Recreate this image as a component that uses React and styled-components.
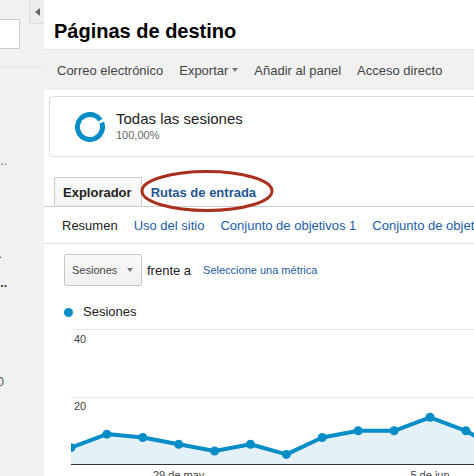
import React from "react";
import styled, { createGlobalStyle } from "styled-components";

const GlobalStyle = createGlobalStyle`
html, body {
    margin: 0;
    padding: 0;
    width: 474px;
    height: 476px;
    overflow: hidden;
    background: #fff;
    font-family: "Liberation Sans", Arial, sans-serif;
}
`

const BLUE = "#058dc7";
const LINK = "#1c5da8";

const Page = styled.div`
display: flex;
height: 476px;
`

/* left navigation, mostly scrolled out of view */
const Sidebar = styled.div`
width: 44px;
flex-shrink: 0;
background: #f1f1f1;
overflow: hidden;
`
const SideHead = styled.div`
height: 66px;
border-bottom: 1px solid #e6e6e6;
display: flex;
justify-content: space-between;
align-items: flex-start;
`
const Search = styled.div`
margin-top: 19px;
margin-left: -1px;
width: 19px;
height: 28px;
background: #fff;
border: 1px solid #ccc;
`
const Collapse = styled.button`
width: 15px;
height: 24px;
padding: 0;
border: 0;
border-left: 1px solid #dcdcdc;
border-bottom: 1px solid #dcdcdc;
background: #ececec;
display: flex;
align-items: center;
justify-content: center;
&::before {
    content: "";
    border-top: 4px solid transparent;
    border-bottom: 4px solid transparent;
    border-right: 5px solid #666;
}
`
const NavItem = styled.div`
margin-top: ${p => p.$top}px;
width: ${p => p.$end}px;
display: flex;
justify-content: flex-end;
white-space: nowrap;
font-size: 12px;
line-height: 16px;
color: ${p => p.$bold ? "#333" : "#555"};
font-weight: ${p => p.$bold ? "bold" : "normal"};
`

const Main = styled.div`
flex: 1;
min-width: 0;
overflow: hidden;
`
const Column = styled.div`
width: 600px;
`
const Header = styled.div`
height: 49px;
box-sizing: border-box;
padding: 21px 0 0 10px;
`
const Title = styled.h1`
margin: 0;
font-size: 20px;
line-height: 20px;
font-weight: bold;
color: #000;
`
const Toolbar = styled.div`
height: 40px;
border-top: 1px solid #e2e2e2;
background: #f1f1f1;
display: flex;
align-items: center;
gap: 16px;
padding-left: 13px;
`
const ToolItem = styled.span`
font-size: 13px;
color: #444;
display: flex;
align-items: center;
gap: 4px;
`
const Caret = styled.span`
border-left: 3.5px solid transparent;
border-right: 3.5px solid transparent;
border-top: 4px solid ${p => p.$color || "#777"};
`

const Segment = styled.div`
margin: 6px 0 0 5px;
height: 59px;
border: 1px solid #ddd;
border-radius: 4px;
display: flex;
align-items: center;
padding-left: 25px;
gap: 11px;
`
const SegText = styled.div`
display: flex;
flex-direction: column;
`
const SegName = styled.span`
font-size: 15px;
line-height: 18px;
color: #222;
`
const SegPct = styled.span`
font-size: 11px;
line-height: 15px;
color: #666;
`

const TabBar = styled.div`
position: relative;
margin-top: 20px;
padding-left: 10px;
display: flex;
border-bottom: 1px solid #ccc;
`
const Tab = styled.div`
height: 28px;
padding: 0 9px 0 8px;
display: flex;
align-items: center;
font-size: 13px;
font-weight: bold;
border: 1px solid ${p => p.$active ? "#ccc" : "transparent"};
border-bottom: 0;
background: ${p => p.$active ? "linear-gradient(#fafafa, #f3f3f3)" : "transparent"};
color: ${p => p.$active ? "#222" : "#1e5694"};
`
const Mark = styled.svg`
position: absolute;
left: 96px;
top: -7px;
`

const SubNav = styled.div`
height: 36px;
border-bottom: 1px solid #ddd;
display: flex;
align-items: center;
gap: 16px;
padding-left: 18px;
font-size: 13px;
white-space: nowrap;
`
const SubLink = styled.span`
color: ${p => p.$current ? "#222" : LINK};
`

const Controls = styled.div`
margin-top: 10px;
padding-left: 20px;
display: flex;
align-items: center;
`
const Select = styled.div`
width: 78px;
height: 32px;
box-sizing: border-box;
border: 1px solid #c8c8c8;
border-radius: 2px;
background: linear-gradient(#f9f9f9, #f0f0f0);
display: flex;
align-items: center;
justify-content: space-between;
padding: 0 8px 0 7px;
font-size: 11px;
color: #444;
`
const Versus = styled.span`
margin-left: 5px;
font-size: 13px;
color: #222;
`
const MetricLink = styled.span`
margin-left: 12px;
font-size: 11px;
color: ${LINK};
`

const Legend = styled.div`
margin-top: 18px;
padding-left: 20px;
display: flex;
align-items: center;
gap: 10px;
font-size: 13px;
line-height: 16px;
color: #222;
`
const Dot = styled.span`
width: 9px;
height: 9px;
border-radius: 50%;
background: ${BLUE};
`

const Chart = styled.svg`
display: block;
margin: 5px 0 0 27px;
font-family: "Liberation Sans", Arial, sans-serif;
`

const sessions = [5, 9, 8, 6, 4, 6, 3, 8, 10, 10, 14, 10, 4, 6];

const Donut = () => (
    <svg width="30" height="30" viewBox="0 0 30 30">
        <circle
            cx="15" cy="15" r="12.5"
            fill="none" stroke={BLUE} strokeWidth="5"
            strokeDasharray="75 3.5"
            transform="rotate(-20 15 15)"
        />
    </svg>
)

const SessionsChart = () => {
    const base = 139.5;
    const step = 35.9;
    const unit = 3.375;
    const pts = sessions.map((v, i) => [i * step, base - v * unit]);
    const line = pts.map(([x, y], i) => `${i ? "L" : "M"}${x.toFixed(1)},${y.toFixed(1)}`).join(" ");
    const area = `${line} L${pts[pts.length - 1][0].toFixed(1)},${base} L0,${base} Z`;
    return (
        <Chart width="520" height="155">
            <line x1="0" x2="520" y1="4.5" y2="4.5" stroke="#e8e8e8" />
            <line x1="0" x2="520" y1="72.5" y2="72.5" stroke="#e8e8e8" />
            <text x="3" y="18" fontSize="11" fill="#444">40</text>
            <text x="3" y="85" fontSize="11" fill="#444">20</text>
            <path d={area} fill="#e5f1f8" />
            <path d={line} fill="none" stroke={BLUE} strokeWidth="4" strokeLinejoin="round" />
            {pts.map(([x, y], i) => (
                <circle key={i} cx={x} cy={y} r="4.5" fill={BLUE} />
            ))}
            <line x1="0" x2="520" y1={base} y2={base} stroke="#333" />
            <text x={3 * step} y="154" fontSize="11" fill="#444" textAnchor="middle">29 de may</text>
            <text x={10 * step} y="154" fontSize="11" fill="#444" textAnchor="middle">5 de jun</text>
        </Chart>
    )
}

const App = () => {
    return (
        <Page>
            <GlobalStyle />
            <Sidebar>
                <SideHead>
                    <Search />
                    <Collapse aria-label="Ocultar" />
                </SideHead>
                <NavItem $top={86} $end={7}>Visión general...</NavItem>
                <NavItem $top={77} $end={2}>Comportamiento.</NavItem>
                <NavItem $top={13} $end={7} $bold>Flujo de usuarios...</NavItem>
                <NavItem $top={83} $end={4}>Ventas 2010</NavItem>
            </Sidebar>
            <Main>
                <Column>
                    <Header>
                        <Title>Páginas de destino</Title>
                    </Header>
                    <Toolbar>
                        <ToolItem>Correo electrónico</ToolItem>
                        <ToolItem>Exportar <Caret /></ToolItem>
                        <ToolItem>Añadir al panel</ToolItem>
                        <ToolItem>Acceso directo</ToolItem>
                    </Toolbar>
                    <Segment>
                        <Donut />
                        <SegText>
                            <SegName>Todas las sesiones</SegName>
                            <SegPct>100,00%</SegPct>
                        </SegText>
                    </Segment>
                    <TabBar>
                        <Tab $active>Explorador</Tab>
                        <Tab>Rutas de entrada</Tab>
                        <Mark width="134" height="42" viewBox="0 0 134 42">
                            <ellipse cx="67" cy="21" rx="65" ry="19.5" fill="none" stroke="#a8301c" strokeWidth="3" />
                        </Mark>
                    </TabBar>
                    <SubNav>
                        <SubLink $current>Resumen</SubLink>
                        <SubLink>Uso del sitio</SubLink>
                        <SubLink>Conjunto de objetivos 1</SubLink>
                        <SubLink>Conjunto de objetivos 2</SubLink>
                    </SubNav>
                    <Controls>
                        <Select>Sesiones <Caret /></Select>
                        <Versus>frente a</Versus>
                        <MetricLink>Seleccione una métrica</MetricLink>
                    </Controls>
                    <Legend>
                        <Dot />
                        Sesiones
                    </Legend>
                    <SessionsChart />
                </Column>
            </Main>
        </Page>
    )
}

export default App;
